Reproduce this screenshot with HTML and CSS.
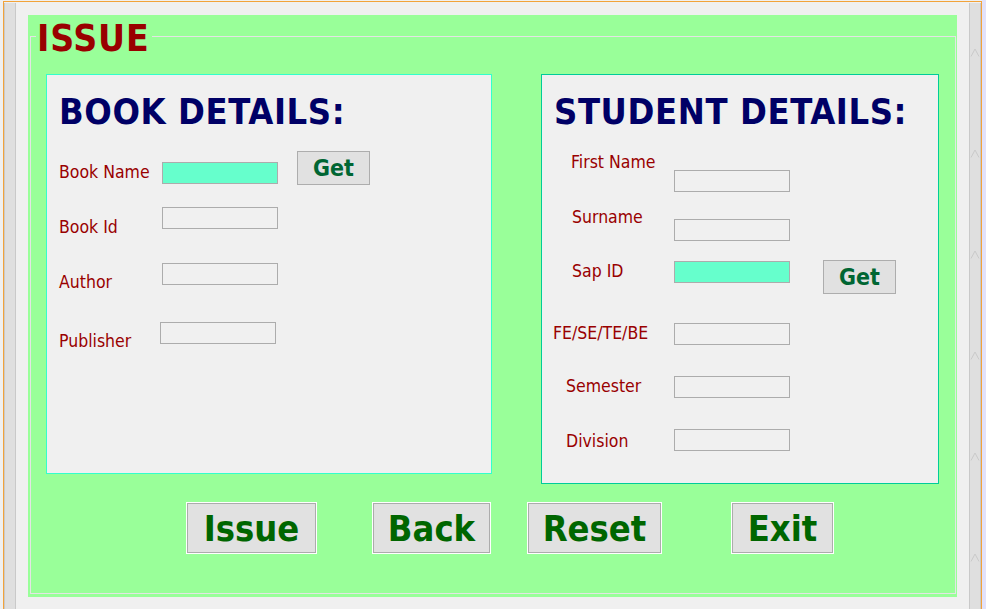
FILE: index.html
```html
<!DOCTYPE html>
<html>
<head>
<meta charset="utf-8">
<title>Issue</title>
<link rel="stylesheet" href="styles.css">
</head>
<body>
<div class="frame">
  <div class="scrollbar"></div>
  <div class="main">
    <div class="green">
      <fieldset class="issue">
        <legend class="title">ISSUE</legend>
        <div class="panels">
          <section class="panel book">
            <h2 class="heading">BOOK DETAILS:</h2>
            <div class="row b1">
              <label class="lbl">Book Name</label>
              <input class="field cyan" type="text">
              <button class="get">Get</button>
            </div>
            <div class="row b2">
              <label class="lbl">Book Id</label>
              <input class="field" type="text">
            </div>
            <div class="row b3">
              <label class="lbl">Author</label>
              <input class="field" type="text">
            </div>
            <div class="row b4">
              <label class="lbl">Publisher</label>
              <input class="field shift" type="text">
            </div>
          </section>
          <section class="panel student">
            <h2 class="heading">STUDENT DETAILS:</h2>
            <div class="row s1">
              <label class="lbl">First Name</label>
              <input class="field" type="text">
            </div>
            <div class="row s2">
              <label class="lbl">Surname</label>
              <input class="field" type="text">
            </div>
            <div class="row s3">
              <label class="lbl">Sap ID</label>
              <input class="field cyan" type="text">
              <button class="get">Get</button>
            </div>
            <div class="row s4">
              <label class="lbl">FE/SE/TE/BE</label>
              <input class="field" type="text">
            </div>
            <div class="row s5">
              <label class="lbl">Semester</label>
              <input class="field" type="text">
            </div>
            <div class="row s6">
              <label class="lbl">Division</label>
              <input class="field" type="text">
            </div>
          </section>
        </div>
        <div class="actions">
          <button class="big issue-btn">Issue</button>
          <button class="big back-btn">Back</button>
          <button class="big reset-btn">Reset</button>
          <button class="big exit-btn">Exit</button>
        </div>
      </fieldset>
    </div>
  </div>
  <div class="scrollbar right">
    <svg class="chev" width="10" height="9" viewBox="0 0 10 9"><path d="M1 8.5 L5 1 L9 8.5" fill="none" stroke="#c9c9c9" stroke-width="1"/></svg>
    <svg class="chev" width="10" height="9" viewBox="0 0 10 9"><path d="M1 8.5 L5 1 L9 8.5" fill="none" stroke="#c9c9c9" stroke-width="1"/></svg>
    <svg class="chev" width="10" height="9" viewBox="0 0 10 9"><path d="M1 8.5 L5 1 L9 8.5" fill="none" stroke="#c9c9c9" stroke-width="1"/></svg>
    <svg class="chev" width="10" height="9" viewBox="0 0 10 9"><path d="M1 8.5 L5 1 L9 8.5" fill="none" stroke="#c9c9c9" stroke-width="1"/></svg>
    <svg class="chev" width="10" height="9" viewBox="0 0 10 9"><path d="M1 8.5 L5 1 L9 8.5" fill="none" stroke="#c9c9c9" stroke-width="1"/></svg>
    <svg class="chev" width="10" height="9" viewBox="0 0 10 9"><path d="M1 8.5 L5 1 L9 8.5" fill="none" stroke="#c9c9c9" stroke-width="1"/></svg>
  </div>
</div>
<div class="edge"></div>
</body>
</html>
```
FILE: styles.css
```css
html, body {
  margin: 0;
  padding: 0;
  height: 609px;
  overflow: hidden;
}
body {
  background: #f0f0f0;
  display: flex;
  align-items: flex-start;
  font-family: "DejaVu Sans Condensed", "DejaVu Sans", sans-serif;
}
.frame {
  margin: 1px 0 0 3px;
  width: 977px;
  height: 608px;
  border-top: 1px solid #f2a33a;
  border-left: 1px solid #f2a33a;
  border-right: 1px solid #f2a33a;
  display: flex;
  align-items: stretch;
  padding-top: 1px;
  box-sizing: content-box;
}
.edge {
  flex: 1;
  height: 609px;
  background: #e2e2fb;
}
.scrollbar {
  width: 12px;
  box-sizing: border-box;
  background: #dfdfdf;
  border-left: 1px solid #c9c9c9;
  border-right: 1px solid #c9c9c9;
  border-bottom: 1px solid #c9c9c9;
}
.scrollbar.right {
  display: flex;
  flex-direction: column;
  align-items: center;
  padding-top: 45px;
  gap: 92px;
}
.chev {
  display: block;
  flex: none;
}
.main {
  width: 953px;
  padding: 12px 0 0 12px;
  box-sizing: border-box;
}
.green {
  width: 929px;
  height: 582px;
  background: #99ff99;
  padding: 0 1px 3px 2px;
  box-sizing: border-box;
  display: flex;
  flex-direction: column;
}
.issue {
  flex: 1;
  margin: 0;
  padding: 17px 16px 0 15px;
  border: 1px solid #e4e4e4;
  min-width: 0;
}
.title {
  font-size: 37px;
  font-weight: bold;
  color: #990000;
  line-height: 36px;
  letter-spacing: 0.8px;
  padding: 6px 3px 0 1px;
  margin-left: -10px;
}
.panels {
  display: flex;
  align-items: flex-start;
  gap: 49px;
}
.panel {
  background: #f0f0f0;
  box-sizing: border-box;
  padding: 16px 0 0 12px;
}
.book {
  width: 446px;
  height: 400px;
  border: 1px solid #33ffcc;
}
.student {
  width: 398px;
  height: 410px;
  border: 1px solid #00cc99;
}
.heading {
  margin: 0;
  font-size: 36px;
  line-height: 42px;
  font-weight: bold;
  letter-spacing: 0.6px;
  color: #000066;
  white-space: nowrap;
}
.row {
  display: flex;
  align-items: flex-start;
}
.lbl {
  font-size: 17.5px;
  line-height: 20px;
  color: #990000;
  white-space: nowrap;
}
.book .lbl {
  width: 103px;
}
.student .lbl {
  width: 120px;
}
.field {
  width: 116px;
  height: 22px;
  box-sizing: border-box;
  margin: 0;
  padding: 0;
  border: 1px solid #acacac;
  background: #f0f0f0;
  outline: none;
}
.field.cyan {
  background: #66ffcc;
}
.field.shift {
  margin-left: -2px;
}
.get {
  width: 73px;
  height: 34px;
  box-sizing: border-box;
  margin: 0;
  padding: 0;
  border: 1px solid #adadad;
  background: #e1e1e1;
  font-family: inherit;
  font-size: 23px;
  font-weight: bold;
  color: #006633;
  line-height: 30px;
}

/* book rows */
.b1 { margin-top: 18px; }
.b1 .lbl { margin-top: 11px; }
.b1 .field { margin-top: 11px; }
.b1 .get { margin-left: 19px; }
.b2 { margin-top: 22px; }
.b2 .lbl { margin-top: 10px; }
.b3 { margin-top: 26px; }
.b3 .lbl { margin-top: 9px; }
.b4 { margin-top: 30px; }
.b4 .lbl { margin-top: 9px; }

/* student rows */
.s1 { margin-top: 19px; }
.s1 .lbl { padding-left: 17px; box-sizing: border-box; }
.s1 .field { margin-top: 18px; }
.s2 { margin-top: 15px; }
.s2 .lbl { padding-left: 18px; box-sizing: border-box; }
.s2 .field { margin-top: 12px; }
.s3 { margin-top: 19px; }
.s3 .lbl { padding-left: 18px; box-sizing: border-box; margin-top: 1px; }
.s3 .field { margin-top: 1px; }
.s3 .get { margin-left: 33px; }
.s4 { margin-top: 29px; }
.s4 .lbl { margin-left: -1px; width: 121px; }
.s5 { margin-top: 31px; }
.s5 .lbl { padding-left: 12px; box-sizing: border-box; }
.s6 { margin-top: 31px; }
.s6 .lbl { padding-left: 12px; box-sizing: border-box; margin-top: 2px; }

/* action buttons */
.actions {
  display: flex;
  margin-top: 18px;
}
.big {
  height: 52px;
  box-sizing: border-box;
  margin: 0;
  padding: 1px 0 0;
  border: 1px solid #ffffff;
  box-shadow: inset 0 0 0 1px #acacac;
  background: #e1e1e1;
  font-family: inherit;
  font-size: 36px;
  font-weight: bold;
  line-height: 48px;
  color: #006600;
}
.issue-btn { width: 131px; margin-left: 140px; }
.back-btn { width: 119px; margin-left: 55px; }
.reset-btn { width: 135px; margin-left: 36px; }
.exit-btn { width: 103px; margin-left: 69px; }
```
